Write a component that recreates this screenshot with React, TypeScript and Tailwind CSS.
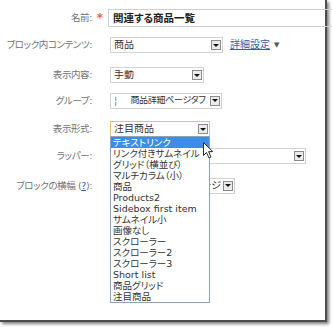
import type { ReactNode } from 'react'

const options = [
  'テキストリンク',
  'リンク付きサムネイル',
  'グリッド（横並び）',
  'マルチカラム（小）',
  '商品',
  'Products2',
  'Sidebox first item',
  'サムネイル小',
  '画像なし',
  'スクローラー',
  'スクローラー2',
  'スクローラー3',
  'Short list',
  '商品グリッド',
  '注目商品',
]

function DropButton() {
  return (
    <span className="flex items-center justify-center w-[10px] h-[10px] mr-px shrink-0 border border-[#8c8c8c] bg-[#ebebeb]">
      <span className="w-0 h-0 border-x-[3px] border-x-transparent border-t-[3px] border-t-[#111]" />
    </span>
  )
}

function Select({
  width,
  focused = false,
  alignEnd = false,
  children,
}: {
  width: string
  focused?: boolean
  alignEnd?: boolean
  children?: ReactNode
}) {
  return (
    <div
      className={`flex items-center h-[16px] shrink-0 bg-white border ${width} ${
        focused ? 'border-[#e2c27c]' : 'border-[#d3d3d3]'
      }`}
    >
      <span
        className={`flex flex-1 min-w-0 overflow-hidden whitespace-nowrap pl-[3px] pr-[2px] text-[#333] ${
          alignEnd ? 'justify-end' : ''
        }`}
      >
        {children}
      </span>
      <DropButton />
    </div>
  )
}

function Row({
  label,
  className,
  star = false,
  children,
}: {
  label: ReactNode
  className: string
  star?: boolean
  children: ReactNode
}) {
  return (
    <div className={`flex items-center ${className}`}>
      <div className="flex justify-end w-[92px] shrink-0 whitespace-nowrap text-[9.5px] tracking-[-0.4px] text-[#737373]">
        <span>{label}</span>
      </div>
      {star ? (
        <div className="w-[16px] shrink-0 text-center text-[12px] font-bold leading-none text-[#e8700f]">*</div>
      ) : (
        <div className="w-[18px] shrink-0" />
      )}
      {children}
    </div>
  )
}

export default function App() {
  return (
    <div className="w-[332px] h-[327px] bg-white overflow-hidden">
      <div className="relative w-[327px] h-[322px] bg-white border-r-2 border-b-2 border-[#4d4d4d] shadow-[2px_2px_3px_rgba(0,0,0,0.5)] font-['DejaVu_Sans','Noto_Sans_CJK_JP',sans-serif] text-[10px] leading-none [font-feature-settings:'palt']">
        <div className="flex flex-col pt-[9px]">
          <Row label="名前:" star className="h-[18px]">
            <div className="flex items-center h-[18px] w-[240px] shrink-0 border border-[#cfcfcf] pl-[4px] text-[10.5px] font-bold text-[#222]">
              関連する商品一覧
            </div>
          </Row>

          <Row label="ブロック内コンテンツ:" className="h-[16px] mt-[10px]">
            <Select width="w-[113px]">商品</Select>
            <a className="ml-[7px] text-[#2f5fae] underline">詳細設定</a>
            <span className="ml-[4px] text-[7px] text-[#555]">▼</span>
          </Row>

          <Row label="表示内容:" className="h-[16px] mt-[14px]">
            <Select width="w-[94px]">手動</Select>
          </Row>

          <Row label="グループ:" className="h-[15px] mt-[10px]">
            <Select width="w-[112px]">
              <span className="text-[#777]">¦</span>
              <span className="ml-[13px] text-[9px] tracking-[-0.3px]">商品詳細ページタブ</span>
            </Select>
          </Row>

          <Row label="表示形式:" className="h-[16px] mt-[13px]">
            <div className="relative">
              <Select width="w-[100px]" focused>
                注目商品
              </Select>
              <ul className="absolute left-0 top-[15px] z-10 w-[100px] border border-[#8fa3b8] bg-white text-[9.5px] text-[#333]">
                {options.map((o, i) => (
                  <li
                    key={o}
                    className={`h-[11px] leading-[11px] pl-[2px] whitespace-nowrap overflow-hidden ${
                      i === 0 ? 'bg-[#3b8ee8] text-white' : ''
                    }`}
                  >
                    {o}
                  </li>
                ))}
              </ul>
            </div>
          </Row>

          <Row label="ラッパー:" className="h-[16px] mt-[11px]">
            <Select width="w-[196px]" />
          </Row>

          <Row
            label={
              <>
                ブロックの横幅 (<span className="text-[#2f5fae] underline">?</span>):
              </>
            }
            className="h-[15px] mt-[14px]"
          >
            <Select width="w-[125px]" alignEnd>
              初期値のページ
            </Select>
          </Row>
        </div>

        <svg
          className="absolute left-[203px] top-[142px] z-20"
          width="11"
          height="17"
          viewBox="0 0 11 17"
        >
          <path
            d="M0.5 0.5 L0.5 13.5 L3.5 10.5 L6 16 L8 15 L5.6 9.6 L9.8 9.6 Z"
            fill="#fff"
            stroke="#333"
            strokeWidth="1"
            strokeLinejoin="round"
          />
        </svg>
      </div>
    </div>
  )
}
